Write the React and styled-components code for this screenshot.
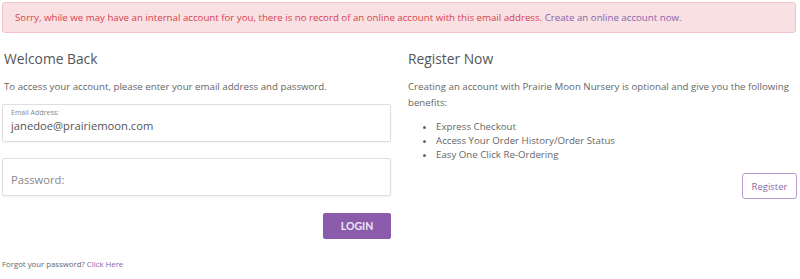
import React from "react";
import styled, { createGlobalStyle } from "styled-components";

const GlobalStyle = createGlobalStyle`
  body {
    margin: 0;
    background: #ffffff;
    font-family: "Open Sans", "Liberation Sans", sans-serif;
  }
`;

const benefits = [
  "Express Checkout",
  "Access Your Order History/Order Status",
  "Easy One Click Re-Ordering",
];

export default function App() {
  return (
    <Page>
      <GlobalStyle />
      <Alert>
        Sorry, while we may have an internal account for you, there is no
        record of an online account with this email address.{" "}
        <AlertLink href="#">Create an online account now.</AlertLink>
      </Alert>
      <Columns>
        <Column>
          <Heading>Welcome Back</Heading>
          <Text>
            To access your account, please enter your email address and
            password.
          </Text>
          <Field>
            <FieldLabel>Email Address:</FieldLabel>
            <FieldValue>janedoe@prairiemoon.com</FieldValue>
          </Field>
          <Field $plain>
            <Placeholder>Password:</Placeholder>
          </Field>
          <Actions>
            <LoginButton>LOGIN</LoginButton>
          </Actions>
          <Forgot>
            Forgot your password? <SmallLink href="#">Click Here</SmallLink>
          </Forgot>
        </Column>
        <Column $right>
          <Heading>Register Now</Heading>
          <Text>
            Creating an account with Prairie Moon Nursery is optional and give
            you the following benefits:
          </Text>
          <List>
            {benefits.map((b) => (
              <li key={b}>{b}</li>
            ))}
          </List>
          <Actions $tight>
            <RegisterButton>Register</RegisterButton>
          </Actions>
        </Column>
      </Columns>
    </Page>
  );
}

const Page = styled.div`
  padding: 2px 4px 0 2px;
  color: #666;
`;

const Alert = styled.div`
  height: 31px;
  box-sizing: border-box;
  padding: 0 12px;
  display: flex;
  align-items: center;
  background: #f9e0e2;
  border: 1px solid #f2c4c8;
  border-radius: 3px;
  color: #d8404f;
  font-size: 9.7px;
  white-space: pre;
`;

const AlertLink = styled.a`
  color: #8763ac;
  text-decoration: none;
`;

const Columns = styled.div`
  display: grid;
  grid-template-columns: 388px 389px;
  column-gap: 17px;
  padding-left: 1px;
`;

const Column = styled.div`
  display: flex;
  flex-direction: column;
  padding-left: ${(p) => (p.$right ? "0" : "1px")};
`;

const Heading = styled.h2`
  margin: 15px 0 0;
  font-size: 13.8px;
  font-weight: 400;
  line-height: 22px;
  color: #555;
`;

const Text = styled.p`
  margin: 9px 0 0;
  font-size: 9.7px;
  line-height: 16px;
  color: #666;
`;

const Field = styled.div`
  margin: ${(p) => (p.$plain ? "16px" : "9px")} 0 0 -2px;
  height: 38px;
  box-sizing: border-box;
  border: 1px solid #dedede;
  border-radius: 2px;
  box-shadow: 0 1px 2px rgba(0, 0, 0, 0.06);
  padding: 0 8px;
  display: flex;
  flex-direction: column;
  justify-content: ${(p) => (p.$plain ? "center" : "flex-start")};
`;

const FieldLabel = styled.span`
  margin-top: 3px;
  font-size: 7px;
  line-height: 9px;
  color: #888;
`;

const FieldValue = styled.span`
  font-size: 11.2px;
  line-height: 18px;
  color: #555;
`;

const Placeholder = styled.span`
  padding-top: 4px;
  font-size: 11.2px;
  color: #888;
`;

const Actions = styled.div`
  display: flex;
  justify-content: flex-end;
  margin-top: ${(p) => (p.$tight ? "11px" : "17px")};
`;

const LoginButton = styled.button`
  width: 68px;
  height: 26px;
  border: none;
  border-radius: 2px;
  background: #8a5cab;
  color: #eee6f4;
  font-family: Lato, "Open Sans", sans-serif;
  font-weight: 700;
  font-size: 10.5px;
  cursor: pointer;
`;

const RegisterButton = styled.button`
  width: 55px;
  height: 26px;
  background: #fff;
  border: 1px solid #b99ad2;
  border-radius: 3px;
  color: #8a6aa8;
  font-family: "Open Sans", sans-serif;
  font-size: 9.5px;
  cursor: pointer;
`;

const List = styled.ul`
  margin: 9px 0 0;
  padding-left: 28px;
  font-size: 9.7px;
  line-height: 14px;
  color: #666;
`;

const Forgot = styled.p`
  margin: 20px 0 0 -2px;
  font-size: 7.8px;
  color: #666;
`;

const SmallLink = styled.a`
  color: #8763ac;
  text-decoration: none;
`;
